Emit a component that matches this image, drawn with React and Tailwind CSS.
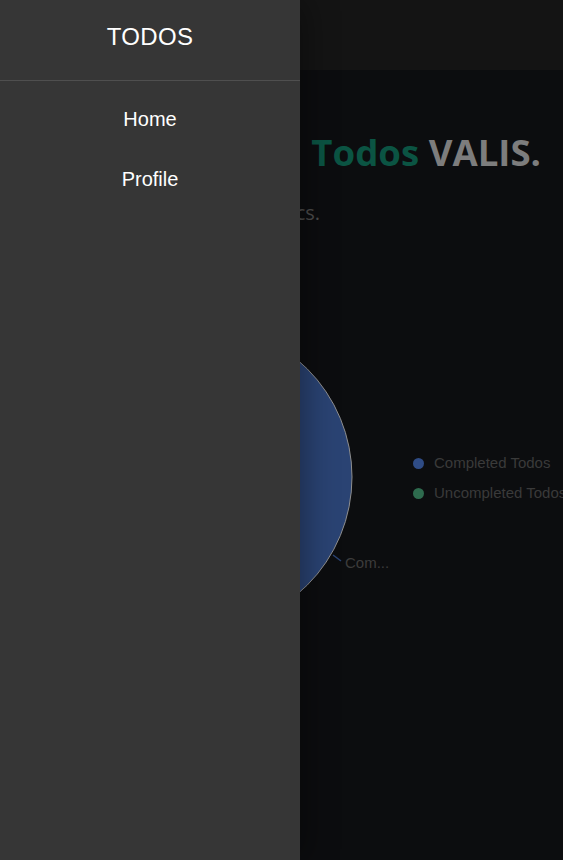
import React from "react";

function PieChartArea() {
  const cx = 199;
  const cy = 178;
  const r = 153;
  return (
    <div className="flex items-center">
      <svg width="405" height="356" className="shrink-0 block">
        <circle cx={cx} cy={cy} r={r} fill="#2a4373" stroke="#8f8f8f" strokeWidth="1" />
        <path d="M333 256 L341 262" stroke="#2a4373" strokeWidth="1.5" fill="none" />
        <text x="345" y="268.5" fill="#3c3c3c" fontSize="15" fontFamily="'Liberation Sans', Arial, sans-serif">
          Com...
        </text>
      </svg>
      <ul className="flex flex-col gap-[10px] pt-[2px] pl-[8px] text-[15px] leading-[20px] text-[#3a3a3a] whitespace-nowrap font-['Liberation_Sans',Arial,sans-serif]">
        <li className="flex items-center gap-[10px]">
          <span className="w-[11px] h-[11px] rounded-full bg-[#2f4c86]" />
          Completed Todos
        </li>
        <li className="flex items-center gap-[10px]">
          <span className="w-[11px] h-[11px] rounded-full bg-[#2e6b4e]" />
          Uncompleted Todos
        </li>
      </ul>
    </div>
  );
}

export default function App() {
  return (
    <div className="relative w-[563px] h-[860px] overflow-hidden bg-[#0c0d0f]">
      <header className="h-[70px] bg-[#141414]" />
      <main className="flex flex-col">
        <h1 className="mt-[60px] pr-[22px] text-right text-[36.6px] leading-[44px] font-bold whitespace-nowrap font-['Open_Sans',sans-serif]">
          <span className="text-[#0b5443]">Todos</span>{" "}
          <span className="text-[#7d7d7d]">VALIS.</span>
        </h1>
        <p className="mt-[25px] pl-[100px] text-[20px] leading-[28px] text-[#4c4c4c] whitespace-nowrap font-['Open_Sans',sans-serif]">
          Here are your statistics.
        </p>
        <div className="mt-[72px]">
          <PieChartArea />
        </div>
      </main>

      <aside className="absolute inset-y-0 left-0 w-[300px] bg-[#363636] shadow-[6px_0_30px_rgba(0,0,0,0.35)] flex flex-col font-['Liberation_Sans',Arial,sans-serif] text-white">
        <div className="h-[81px] pb-[7px] flex items-center justify-center border-b border-[#4f4f4f] text-[24px] tracking-[0.3px]">
          TODOS
        </div>
        <nav className="flex flex-col pt-[8px]">
          <a className="h-[60px] flex items-center justify-center text-[20px]">Home</a>
          <a className="h-[60px] flex items-center justify-center text-[20px]">Profile</a>
        </nav>
      </aside>
    </div>
  );
}
